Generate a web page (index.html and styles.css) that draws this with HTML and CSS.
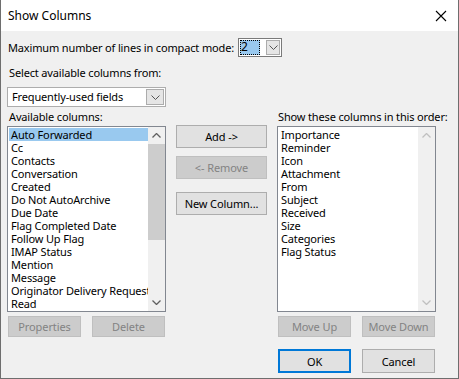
FILE: index.html
```html
<!DOCTYPE html>
<html lang="en">

<head>
    <meta charset="UTF-8">
    <title>Show Columns</title>
    <link rel="stylesheet" href="styles.css">
</head>

<body>
    <div class="window">
        <div class="titlebar">
            <span class="title">Show Columns</span>
            <svg class="close" width="12" height="12" viewBox="0 0 12 12">
                <path d="M1 1 L11 11 M11 1 L1 11" stroke="#000" stroke-width="1.1" fill="none" />
            </svg>
        </div>

        <div class="content">
            <!-- compact mode lines -->
            <div class="row-lines">
                <span>Maximum number of lines in compact mode:</span>
                <div class="combo combo-small">
                    <div class="combo-value"><span class="picked">2</span></div>
                    <div class="combo-btn">
                        <svg width="9" height="5" viewBox="0 0 9 5"><path d="M0.5 0.5 L4.5 4.5 L8.5 0.5" stroke="#555" fill="none" /></svg>
                    </div>
                </div>
            </div>

            <div class="label label-from">Select available columns from:</div>
            <div class="combo combo-wide">
                <div class="combo-value">Frequently-used fields</div>
                <div class="combo-btn">
                    <svg width="9" height="5" viewBox="0 0 9 5"><path d="M0.5 0.5 L4.5 4.5 L8.5 0.5" stroke="#555" fill="none" /></svg>
                </div>
            </div>

            <div class="columns">
                <div class="label col-label">Available columns:</div>
                <div></div>
                <div class="label col-label">Show these columns in this order:</div>

                <!-- available list -->
                <div class="listbox">
                    <ul class="items">
                        <li class="selected">Auto Forwarded</li>
                        <li>Cc</li>
                        <li>Contacts</li>
                        <li>Conversation</li>
                        <li>Created</li>
                        <li>Do Not AutoArchive</li>
                        <li>Due Date</li>
                        <li>Flag Completed Date</li>
                        <li>Follow Up Flag</li>
                        <li>IMAP Status</li>
                        <li>Mention</li>
                        <li>Message</li>
                        <li>Originator Delivery Requested</li>
                        <li>Read</li>
                    </ul>
                    <div class="scrollbar">
                        <div class="arrow">
                            <svg width="9" height="5" viewBox="0 0 9 5"><path d="M0.5 4.5 L4.5 0.5 L8.5 4.5" stroke="#606060" stroke-width="1.3" fill="none" /></svg>
                        </div>
                        <div class="track"><div class="thumb"></div></div>
                        <div class="arrow">
                            <svg width="9" height="5" viewBox="0 0 9 5"><path d="M0.5 0.5 L4.5 4.5 L8.5 0.5" stroke="#606060" stroke-width="1.3" fill="none" /></svg>
                        </div>
                    </div>
                </div>

                <!-- middle buttons -->
                <div class="middle">
                    <button class="btn">Add -&gt;</button>
                    <button class="btn disabled">&lt;- Remove</button>
                    <button class="btn btn-new">New Column...</button>
                </div>

                <!-- shown list -->
                <div class="listbox">
                    <ul class="items">
                        <li>Importance</li>
                        <li>Reminder</li>
                        <li>Icon</li>
                        <li>Attachment</li>
                        <li>From</li>
                        <li>Subject</li>
                        <li>Received</li>
                        <li>Size</li>
                        <li>Categories</li>
                        <li>Flag Status</li>
                    </ul>
                    <div class="scrollbar off">
                        <div class="arrow">
                            <svg width="9" height="5" viewBox="0 0 9 5"><path d="M0.5 4.5 L4.5 0.5 L8.5 4.5" stroke="#c0c0c0" stroke-width="1.3" fill="none" /></svg>
                        </div>
                        <div class="track"></div>
                        <div class="arrow">
                            <svg width="9" height="5" viewBox="0 0 9 5"><path d="M0.5 0.5 L4.5 4.5 L8.5 0.5" stroke="#c0c0c0" stroke-width="1.3" fill="none" /></svg>
                        </div>
                    </div>
                </div>

                <div class="pair">
                    <button class="btn small disabled">Properties</button>
                    <button class="btn small disabled">Delete</button>
                </div>
                <div></div>
                <div class="pair">
                    <button class="btn small disabled">Move Up</button>
                    <button class="btn small disabled">Move Down</button>
                </div>

                <div></div>
                <div></div>
                <div class="pair pair-ok">
                    <button class="btn small ok">OK</button>
                    <button class="btn small">Cancel</button>
                </div>
            </div>
        </div>
    </div>
</body>

</html>
```

FILE: styles.css
```css
* {
    box-sizing: border-box;
}

body {
    margin: 0;
    padding: 0;
    font-family: "Noto Sans", "Open Sans", sans-serif;
    font-size: 11px;
    letter-spacing: -0.15px;
    color: #000;
    background: #f0f0f0;
}

.window {
    width: 459px;
    height: 379px;
    border: 1px solid #6e6e6e;
    border-top: none;
    background: #f0f0f0;
    overflow: hidden;
}

.titlebar {
    height: 31px;
    background: #fff;
    display: flex;
    align-items: center;
    justify-content: space-between;
    padding: 0 11px 0 7px;
}

.title {
    font-size: 12px;
    letter-spacing: 0;
    margin-top: -1px;
}

.content {
    padding-left: 6px;
}

.row-lines {
    display: flex;
    align-items: center;
    height: 19px;
    margin-top: 7px;
    padding-left: 1px;
}

.row-lines span {
    margin-right: 4px;
}

.combo {
    display: flex;
    background: #fff;
    border: 1px solid #7a7a7a;
}

.combo-small {
    width: 44px;
    height: 19px;
    padding: 1px;
}

.combo-small .combo-value {
    flex: 1;
    display: flex;
}

.picked {
    display: block;
    width: 20px;
    height: 15px;
    line-height: 14px;
    font-size: 12px;
    background: #99c9ef;
    outline: 1px dotted #000;
    outline-offset: -1px;
    padding-left: 1px;
}

.combo-btn {
    width: 18px;
    display: flex;
    align-items: center;
    justify-content: center;
    background: #e5e5e5;
    border: 1px solid #acacac;
}

.combo-small .combo-btn {
    margin-left: 2px;
}

.label {
    height: 14px;
    line-height: 14px;
    padding-left: 2px;
    white-space: nowrap;
}

.label-from {
    margin-top: 9px;
}

.combo-wide {
    width: 159px;
    height: 20px;
    margin-top: 7px;
    border-color: #adadad;
    padding: 1px 1px 1px 4px;
}

.combo-wide .combo-value {
    flex: 1;
    line-height: 16px;
}

.columns {
    display: grid;
    grid-template-columns: 159px 91px 159px;
    column-gap: 10px;
    margin-top: 3px;
}

.col-label {
    margin-bottom: 2px;
}

.columns > .col-label:nth-child(3) {
    padding-left: 1px;
}

.listbox {
    height: 186px;
    border: 1px solid #828790;
    background: #fff;
    display: flex;
}

.items {
    list-style: none;
    margin: 0;
    padding: 1px 0 0 1px;
    flex: 1;
    min-width: 0;
    overflow: hidden;
}

.items li {
    height: 13px;
    line-height: 13px;
    padding-left: 2px;
    white-space: nowrap;
}

.items li.selected {
    background: #99c9ef;
}

.scrollbar {
    width: 17px;
    flex-shrink: 0;
    display: flex;
    flex-direction: column;
    background: #f0f0f0;
}

.arrow {
    height: 17px;
    display: flex;
    align-items: center;
    justify-content: center;
}

.track {
    flex: 1;
}

.thumb {
    height: 96px;
    background: #cdcdcd;
}

.middle {
    display: flex;
    flex-direction: column;
    margin-top: -1px;
}

.btn {
    font-family: inherit;
    font-size: 11px;
    letter-spacing: -0.1px;
    color: #000;
    background: #e1e1e1;
    border: 1px solid #adadad;
    height: 23px;
    padding: 0;
    margin: 0;
}

.middle .btn + .btn {
    margin-top: 8px;
}

.middle .btn-new {
    margin-top: 13px !important;
}

.btn.disabled {
    background: #cccccc;
    border-color: #bfbfbf;
    color: #838383;
}

.pair {
    display: flex;
    justify-content: space-between;
    padding: 0 1px;
    margin-top: 4px;
}

.btn.small {
    width: 73px;
    height: 21px;
}

.pair-ok {
    margin-top: 12px;
}

.pair-ok .btn.small {
    height: 24px;
}

.btn.ok {
    border: 2px solid #0078d7;
}
```
